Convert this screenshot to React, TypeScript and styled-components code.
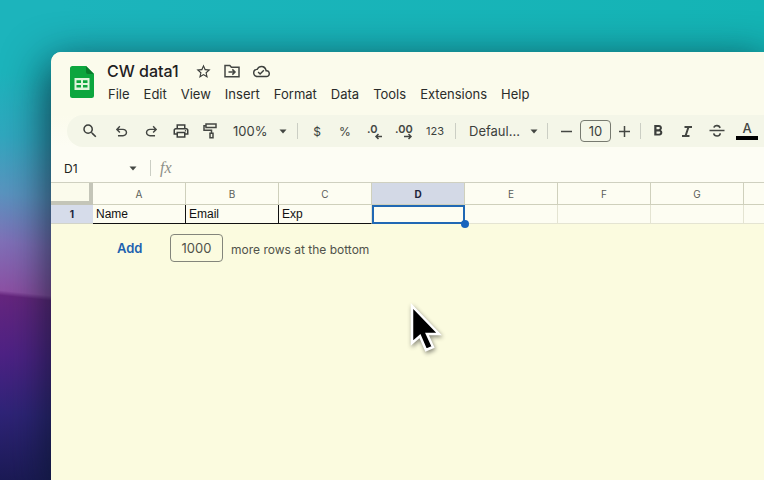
import React from "react";
import styled, { createGlobalStyle } from "styled-components";
import { MdSearch, MdStarBorder, MdOutlinePrint, MdOutlineCloudDone, MdFormatBold } from "react-icons/md";

const GlobalStyle = createGlobalStyle`
  * { box-sizing: border-box; }
  html, body { margin: 0; overflow: hidden; }
  body { font-family: Inter, "Liberation Sans", sans-serif; color: #3c3f3c; }
  button, input, select { font: inherit; color: inherit; }
`;

const Desktop = styled.div`
  min-height: 100vh;
  padding: 52px 0 0 51px;
  display: flex;
  background:
    linear-gradient(186deg, #1cb4bc 0, #1cb4bc 16%, #30a8bf 29%, #5a94c0 41%, #8070b8 51%, #8d51a5 61%, #66267f 62%, #4e2285 74%, #2f2478 86%, #1b1a55 100%) 0 0 / 60px 100% no-repeat,
    linear-gradient(90deg, #1cb4bc 60px, #14b4b5);
`;

const Window = styled.main`
  position: relative;
  flex: 1;
  min-width: 0;
  overflow: hidden;
  border-top-left-radius: 10px;
  background: #fbfbdf;
  box-shadow: 0 14px 44px 4px rgba(6, 22, 36, 0.75);
`;

const Header = styled.header`
  display: flex;
  gap: 13px;
  padding: 9px 0 0 19px;
  height: 63px;
  background: #fbfbec;
`;

const Logo = styled.svg`
  width: 24px;
  height: 32px;
  margin-top: 5px;
  flex: none;
`;

const TitleRow = styled.div`
  display: flex;
  align-items: center;
  height: 20px;
`;

const Title = styled.h1`
  margin: 0 10px 0 0;
  font-size: 16px;
  line-height: 20px;
  font-weight: 500;
  color: #1f211f;
`;

const IconButton = styled.button`
  display: grid;
  place-items: center;
  width: 29px;
  height: 20px;
  padding: 0;
  border: 0;
  background: none;
`;

const Menu = styled.nav`
  display: flex;
  gap: 14px;
  height: 26px;
  padding-left: 1px;
`;

const MenuItem = styled.button`
  padding: 0;
  border: 0;
  background: none;
  font-size: 13px;
  line-height: 24px;
  color: #2a2c2a;
`;

const ToolStrip = styled.div`
  padding-left: 16px;
  background: linear-gradient(#fbfbec, #fdfdf4);
`;

const Toolbar = styled.div`
  display: flex;
  align-items: center;
  height: 32px;
  padding-left: 7px;
  border-radius: 16px 0 0 16px;
  background: #f4f6e8;
`;

const Tool = styled.button<{ $w?: number; $size?: number }>`
  flex: none;
  display: grid;
  place-items: center;
  width: ${(p) => p.$w ?? 30}px;
  height: 28px;
  padding: 0;
  border: 0;
  background: none;
  font-size: ${(p) => p.$size ?? 12}px;
`;

const Divider = styled.span<{ $w?: number }>`
  flex: none;
  display: grid;
  place-items: center;
  width: ${(p) => p.$w ?? 10}px;
  &::before {
    content: "";
    width: 1px;
    height: 16px;
    background: #cbcec4;
  }
`;

const Picker = styled.label<{ $w: number }>`
  flex: none;
  display: flex;
  align-items: center;
  width: ${(p) => p.$w}px;
  padding: 0 4px 0 9px;
`;

const Select = styled.select`
  appearance: none;
  flex: 1;
  min-width: 0;
  padding: 0;
  border: 0;
  background: none;
  font-size: 13px;
`;

const SizeInput = styled.input`
  flex: none;
  width: 31px;
  height: 22px;
  padding: 0;
  border: 1px solid #777a70;
  border-radius: 4px;
  background: none;
  font-size: 13px;
  text-align: center;
`;

const FormulaBar = styled.div`
  display: flex;
  align-items: center;
  height: 35px;
  padding: 7px 0 0 13px;
  background: #fdfdf4;
`;

const NameInput = styled.input`
  width: 56px;
  padding: 0;
  border: 0;
  background: none;
  font-size: 12px;
  color: #202220;
`;

const FormulaInput = styled.input`
  flex: 1;
  min-width: 0;
  border: 0;
  background: none;
`;

const Fx = styled.span`
  width: 24px;
  padding-left: 5px;
  font: italic 16px/20px "Liberation Serif", serif;
  color: #8d8f88;
`;

const Sheet = styled.table`
  table-layout: fixed;
  width: 100%;
  border-collapse: separate;
  border-spacing: 0;
  border-top: 1px solid #cfd0c0;
  background: #fdfdf2;
`;

const Corner = styled.th`
  width: 42px;
  height: 22px;
  padding: 0;
  border: solid #c4c5b8;
  border-width: 0 4px 4px 0;
  background: #fbfbec;
`;

const ColumnHead = styled.th<{ $active?: boolean; $rest?: boolean }>`
  width: ${(p) => (p.$rest ? "auto" : "93px")};
  padding: 0;
  border: solid #cfd0bc;
  border-width: 0 ${(p) => (p.$rest ? 0 : 1)}px 1px 0;
  font-size: 10px;
  line-height: 20px;
  font-weight: ${(p) => (p.$active ? 700 : 400)};
  color: ${(p) => (p.$active ? "#20243a" : "#5b5d58")};
  background: ${(p) => (p.$active ? "#d3d9e6" : "transparent")};
`;

const RowHead = styled.th`
  height: 19px;
  padding: 0;
  border-bottom: 1px solid #d2d4c8;
  font-size: 10px;
  font-weight: 700;
  color: #20243a;
  background: #d6dcea;
`;

const Cell = styled.td<{ $filled?: boolean; $edge?: boolean; $active?: boolean; $rest?: boolean }>`
  position: relative;
  padding: 0 3px;
  border: solid #e4e4d2;
  border-width: 0 ${(p) => (p.$rest ? 0 : 1)}px 1px 0;
  ${(p) => p.$filled && "border-bottom-color: #111;"}
  ${(p) => p.$edge && "border-right-color: #111;"}
  ${(p) => p.$active && "z-index: 1; box-shadow: inset 0 2px #2068b4, inset 2px 0 #2068b4, inset -1px -1px #2068b4; border-color: #2068b4;"}
  font-family: "Liberation Sans", Arial, sans-serif;
  font-size: 12px;
  line-height: 18px;
  color: #111;
`;

const Handle = styled.span`
  position: absolute;
  right: -5px;
  bottom: -5px;
  width: 8px;
  height: 8px;
  border-radius: 50%;
  background: #1763bd;
`;

const AddRows = styled.form`
  display: flex;
  align-items: center;
  gap: 8px;
  padding: 10px 0 0 66px;
  font-size: 12px;
  color: #50524a;
`;

const AddButton = styled.button`
  width: 45px;
  padding: 0;
  border: 0;
  background: none;
  font-size: 13px;
  font-weight: 600;
  color: #1d62b0;
  text-align: left;
`;

const RowsInput = styled.input`
  width: 53px;
  height: 28px;
  padding: 0;
  border: 1px solid #83857b;
  border-radius: 4px;
  background: none;
  font-size: 13px;
  text-align: center;
`;

const RowsLabel = styled.label`
  padding-top: 3px;
`;

const Pointer = styled.svg`
  position: absolute;
  left: 356px;
  top: 250px;
  width: 38px;
  height: 56px;
  filter: drop-shadow(1px 2px 2px rgba(0, 0, 0, 0.45));
`;

const Caret = () => (
  <svg width="8" height="5" viewBox="0 0 8 5" aria-hidden="true"><path d="M0.5 0.5h7L4 4.5z" fill="#444743" /></svg>
);

const stroke = { fill: "none", stroke: "#444743", strokeWidth: 1.5 } as const;

const MoveIcon = () => (
  <svg width="16" height="14" viewBox="0 0 16 14" {...stroke}>
    <path d="M1 12.7V1.5h4.8l1.6 1.8H15v9.4H1zM4.5 8h6.2M8.3 5.4 11 8l-2.700 2.600" />
  </svg>
);

const HISTORY = "M280-200v-80h284q63 0 109.500-40T720-420q0-60-46.500-100T564-560H312l104 104-56 56-200-200 200-200 56 56-104 104h252q97 0 167 63t70 157q0 94-70 157t-167 63H280Z";

const UndoIcon = () => (
  <svg width="17" height="17" viewBox="0 -960 960 960" fill="#444743"><path d={HISTORY} /></svg>
);

const RedoIcon = () => (
  <svg width="17" height="17" viewBox="0 -960 960 960" fill="#444743"><path d={HISTORY} transform="matrix(-1 0 0 1 960 0)" /></svg>
);

const PaintIcon = () => (
  <svg width="14" height="16" viewBox="0 0 14 16" {...stroke}>
    <path d="M3 1h10v3.500H3zM3 2.700H1v4.500h7.500V10M7 10.200h3v4.600H7z" />
  </svg>
);

const DecimalIcon = ({ text, more }: { text: string; more?: boolean }) => (
  <svg width="20" height="18" viewBox="0 0 20 18">
    <text x={more ? 0 : 2} y="11" fontFamily="Inter, sans-serif" fontSize="11" fontWeight="600" fill="#444743">{text}</text>
    <path d={more ? "M9 14.500h7M13.500 12l2.500 2.500-2.500 2.500" : "M17 14.500h-6M13.500 12 11 14.500l2.500 2.500"} {...stroke} />
  </svg>
);

const ItalicIcon = () => (
  <svg width="12" height="13" viewBox="0 0 12 13" {...stroke} strokeWidth={2}>
    <path d="M3.500 2H11M1 11h7.500M7.500 2l-3 9" />
  </svg>
);

const StrikeIcon = () => (
  <svg width="16" height="14" viewBox="0 0 16 14" {...stroke} strokeWidth={1.6}>
    <path d="M0.500 6.500h15M11 4c-.5-3-5.500-3.200-6-.3M4.700 9.300c.6 3.600 6.500 3.500 6.500 0" />
  </svg>
);

const ColorIcon = () => (
  <svg width="22" height="20" viewBox="0 0 22 20">
    <text x="11" y="12" textAnchor="middle" fontFamily="Inter, sans-serif" fontSize="13" fontWeight="500" fill="#444743">A</text>
    <path d="M0 15h22v4H0z" fill="#000" />
  </svg>
);

const MENUS = ["File", "Edit", "View", "Insert", "Format", "Data", "Tools", "Extensions", "Help"];
const COLUMNS = "ABCDEFG".split("");
const VALUES: Record<string, string> = { A: "Name", B: "Email", C: "Exp" };

export default function App() {
  return (
    <>
      <GlobalStyle />
      <Desktop>
        <Window>
          <Header>
            <Logo viewBox="0 0 24 32" aria-label="Sheets">
              <path d="M2.500 0H16l8 8v21.500a2.500 2.500 0 0 1-2.500 2.500h-19A2.500 2.500 0 0 1 0 29.500v-27A2.500 2.500 0 0 1 2.500 0z" fill="#0ca63e" />
              <path d="M16 0l8 8h-6a2 2 0 0 1-2-2z" fill="#087c2c" />
              <path d="M4.500 12h15v12h-15zM6.500 14.300v2.600h4.500v-2.600zM13 14.300v2.600h4.500v-2.600zM6.500 19v2.600h4.500V19zM13 19v2.600h4.500V19z" fill="#dff5dc" fillRule="evenodd" />
            </Logo>
            <div>
              <TitleRow>
                <Title>CW data1</Title>
                <IconButton aria-label="Star"><MdStarBorder size={17} /></IconButton>
                <IconButton aria-label="Move"><MoveIcon /></IconButton>
                <IconButton aria-label="Saved"><MdOutlineCloudDone size={17} /></IconButton>
              </TitleRow>
              <Menu>{MENUS.map((m) => <MenuItem key={m}>{m}</MenuItem>)}</Menu>
            </div>
          </Header>
          <ToolStrip>
            <Toolbar role="toolbar">
              <Tool $w={32} aria-label="Search"><MdSearch size={18} /></Tool>
              <Tool aria-label="Undo"><UndoIcon /></Tool>
              <Tool aria-label="Redo"><RedoIcon /></Tool>
              <Tool aria-label="Print"><MdOutlinePrint size={18} /></Tool>
              <Tool $w={28} aria-label="Paint format"><PaintIcon /></Tool>
              <Picker $w={67}><Select aria-label="Zoom"><option>100%</option></Select><Caret /></Picker>
              <Divider $w={13} />
              <Tool $w={26}>$</Tool>
              <Tool>%</Tool>
              <Tool aria-label="Decrease decimals"><DecimalIcon text=".0" /></Tool>
              <Tool aria-label="Increase decimals"><DecimalIcon text=".00" more /></Tool>
              <Tool $size={11}>123</Tool>
              <Divider />
              <Picker $w={82}><Select aria-label="Font"><option>Defaul...</option></Select><Caret /></Picker>
              <Divider />
              <Tool $w={28} aria-label="Smaller"><svg width="11" height="11" {...stroke}><path d="M0 5.500h11" /></svg></Tool>
              <SizeInput aria-label="Font size" defaultValue="10" />
              <Tool $w={26} aria-label="Larger"><svg width="11" height="11" {...stroke}><path d="M0 5.500h11M5.500 0v11" /></svg></Tool>
              <Divider $w={7} />
              <Tool $w={28} aria-label="Bold"><MdFormatBold size={18} /></Tool>
              <Tool aria-label="Italic"><ItalicIcon /></Tool>
              <Tool aria-label="Strikethrough"><StrikeIcon /></Tool>
              <Tool aria-label="Text color"><ColorIcon /></Tool>
            </Toolbar>
          </ToolStrip>
          <FormulaBar>
            <NameInput aria-label="Name box" defaultValue="D1" />
            <Tool $w={26} aria-label="Named ranges"><Caret /></Tool>
            <Divider $w={9} />
            <Fx>fx</Fx>
            <FormulaInput aria-label="Formula" />
          </FormulaBar>
          <Sheet>
            <thead>
              <tr>
                <Corner />
                {COLUMNS.map((c) => <ColumnHead key={c} $active={c === "D"}>{c}</ColumnHead>)}
                <ColumnHead $rest />
              </tr>
            </thead>
            <tbody>
              <tr>
                <RowHead>1</RowHead>
                {COLUMNS.map((c) => (
                  <Cell key={c} $filled={c in VALUES} $edge={c === "A" || c === "B"} $active={c === "D"}>
                    {VALUES[c]}
                    {c === "D" && <Handle />}
                  </Cell>
                ))}
                <Cell $rest />
              </tr>
            </tbody>
          </Sheet>
          <AddRows onSubmit={(e) => e.preventDefault()}>
            <AddButton>Add</AddButton>
            <RowsInput id="rows" defaultValue="1000" />
            <RowsLabel htmlFor="rows">more rows at the bottom</RowsLabel>
          </AddRows>
          <Pointer viewBox="0 0 38 56" aria-hidden="true">
            <path d="M5 4v37l8-7 6 14 7-3-6-13h12z" fill="#000" stroke="#fff" strokeWidth="2.500" />
          </Pointer>
        </Window>
      </Desktop>
    </>
  );
}
